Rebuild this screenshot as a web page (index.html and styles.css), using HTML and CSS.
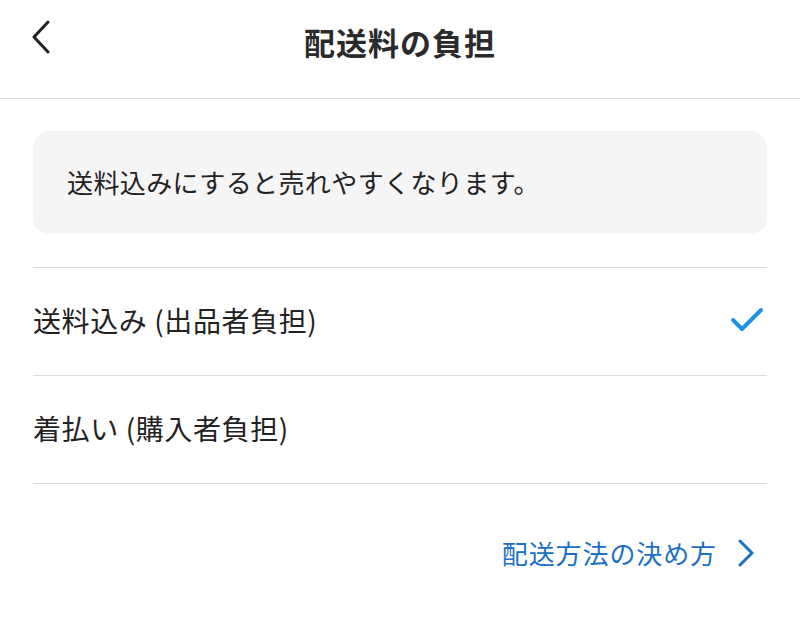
FILE: index.html
```html
<!DOCTYPE html>
<html lang="ja">
<head>
<meta charset="utf-8">
<link rel="stylesheet" href="styles.css">
</head>
<body>
<div class="page">
  <header class="header">
    <button class="back" aria-label="戻る">
      <svg width="22" height="34" viewBox="0 0 22 34"><path d="M18 2 L4 17 L18 32" fill="none" stroke="#222" stroke-width="3" stroke-linecap="round" stroke-linejoin="round"/></svg>
    </button>
    <h1 class="title">配送料の負担</h1>
  </header>
  <main class="content">
    <div class="notice">送料込みにすると売れやすくなります。</div>
    <ul class="options">
      <li class="option">
        <span class="option-label">送料込み (出品者負担)</span>
        <svg class="check" width="34" height="26" viewBox="0 0 34 26"><path d="M3 13 L12 22 L31 3" fill="none" stroke="#1f93e6" stroke-width="4" stroke-linecap="round" stroke-linejoin="round"/></svg>
      </li>
      <li class="option">
        <span class="option-label">着払い (購入者負担)</span>
      </li>
    </ul>
    <div class="link-row">
      <a class="link" href="#">配送方法の決め方
        <svg class="chev" width="18" height="28" viewBox="0 0 18 28"><path d="M3 2 L15 14 L3 26" fill="none" stroke="#1c70c4" stroke-width="3" stroke-linecap="round" stroke-linejoin="round"/></svg>
      </a>
    </div>
  </main>
</div>
</body>
</html>
```
FILE: styles.css
```css
html, body {
  margin: 0;
  padding: 0;
  background: #fff;
}
body {
  font-family: "Noto Sans CJK JP", "Noto Sans", sans-serif;
  color: #222;
}
.page {
  width: 800px;
  height: 640px;
  overflow: hidden;
}
.header {
  height: 98px;
  border-bottom: 1px solid #dddddd;
  display: flex;
  align-items: center;
  justify-content: center;
  position: relative;
}
.back {
  position: absolute;
  left: 30px;
  top: 20px;
  padding: 0;
  border: 0;
  background: none;
  display: flex;
}
.title {
  margin: 0 0 16px 0;
  font-size: 31px;
  font-weight: 700;
  color: #2a2a2a;
  letter-spacing: 1px;
}
.content {
  padding: 32px 33px 0 33px;
}
.notice {
  background: #f5f5f5;
  border-radius: 16px;
  height: 103px;
  display: flex;
  align-items: center;
  padding-left: 34px;
  font-size: 26px;
  letter-spacing: 0.4px;
  color: #222;
  padding-bottom: 2px;
  box-sizing: border-box;
}
.options {
  list-style: none;
  margin: 33px 0 0 0;
  padding: 0;
  border-top: 1px solid #dddddd;
}
.option {
  height: 107px;
  border-bottom: 1px solid #dddddd;
  display: flex;
  align-items: center;
  justify-content: space-between;
}
.option-label {
  font-size: 28px;
  letter-spacing: 0.6px;
  color: #222;
  margin-top: -4px;
}
.check {
  margin-right: 3px;
  margin-top: -4px;
}
.link-row {
  display: flex;
  justify-content: flex-end;
  padding-top: 50px;
}
.link {
  display: flex;
  align-items: center;
  gap: 20px;
  font-size: 26px;
  letter-spacing: 0.9px;
  color: #1c70c4;
  text-decoration: none;
  margin-right: 12px;
}
```
